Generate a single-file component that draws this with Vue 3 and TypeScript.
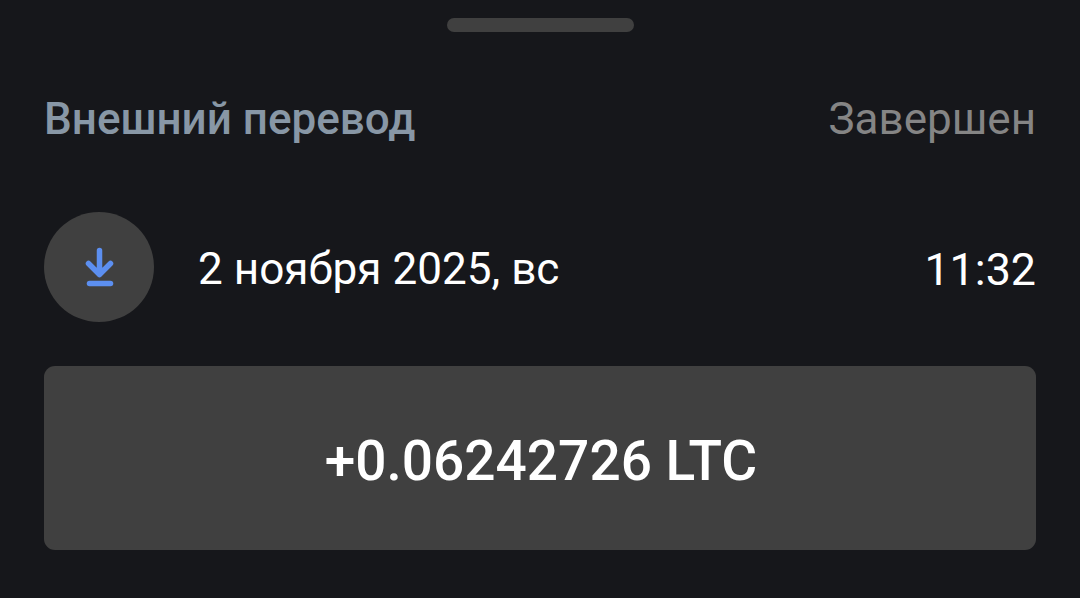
<script setup lang="ts">
const transfer = {
  title: 'Внешний перевод',
  status: 'Завершен',
  date: '2 ноября 2025, вс',
  time: '11:32',
  amount: '+0.06242726 LTC',
}
</script>

<template>
  <div class="sheet">
    <div class="handle"></div>
    <div class="header">
      <span class="title">{{ transfer.title }}</span>
      <span class="status">{{ transfer.status }}</span>
    </div>
    <div class="info">
      <div class="icon">
        <svg width="30" height="40" viewBox="0 0 30 40" fill="none">
          <path d="M15.5 3.5V27.5M4.5 16.5L15.5 27.5L26.5 16.5" stroke="#5c8ff0" stroke-width="5.5" stroke-linecap="round" stroke-linejoin="round" />
          <path d="M5.5 36.5H26.5" stroke="#5c8ff0" stroke-width="5.5" stroke-linecap="round" />
        </svg>
      </div>
      <span class="date">{{ transfer.date }}</span>
      <span class="time">{{ transfer.time }}</span>
    </div>
    <div class="amount">{{ transfer.amount }}</div>
  </div>
</template>

<style scoped>
.sheet {
  width: 1080px;
  height: 598px;
  box-sizing: border-box;
  padding: 18px 44px 0;
  background: #16171b;
  font-family: Roboto, "Noto Sans", sans-serif;
  overflow: hidden;
}

.handle {
  width: 187px;
  height: 14px;
  margin: 0 auto;
  border-radius: 7px;
  background: #404040;
}

.header {
  display: flex;
  justify-content: space-between;
  align-items: center;
  margin-top: 55px;
  height: 64px;
  font-size: 44px;
}

.title {
  font-weight: 500;
  color: #8897a6;
}

.status {
  color: #858585;
}

.info {
  display: flex;
  align-items: center;
  margin-top: 61px;
  color: #fff;
  font-size: 44.1px;
}

.icon {
  display: flex;
  align-items: center;
  justify-content: center;
  width: 110px;
  height: 110px;
  border-radius: 50%;
  background: #404040;
}

.date {
  margin-left: 44px;
  padding-top: 4px;
  flex: 1;
}

.time {
  padding-top: 4px;
  font-size: 44.8px;
}

.amount {
  display: flex;
  align-items: center;
  justify-content: center;
  height: 184px;
  box-sizing: border-box;
  padding: 5px 0 0 2px;
  margin-top: 44px;
  border-radius: 11px;
  background: #404040;
  color: #fff;
  font-size: 55px;
  font-weight: 500;
}
</style>
